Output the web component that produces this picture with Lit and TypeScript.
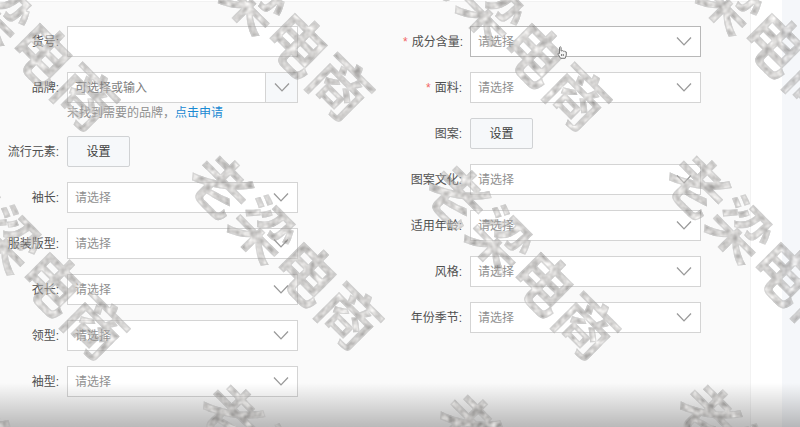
import { LitElement, html, svg, css, nothing } from "lit";
import { customElement, property } from "lit/decorators.js";

type Kind = "text" | "combo" | "button" | "select";

interface Field {
  id: string;
  label: string;
  kind: Kind;
  required?: boolean;
  active?: boolean;
}

const LEFT: Field[] = [
  { id: "sku", label: "货号", kind: "text" },
  { id: "brand", label: "品牌", kind: "combo" },
  { id: "trend", label: "流行元素", kind: "button" },
  { id: "sleeve-length", label: "袖长", kind: "select" },
  { id: "fit", label: "服装版型", kind: "select" },
  { id: "length", label: "衣长", kind: "select" },
  { id: "collar", label: "领型", kind: "select" },
  { id: "sleeve-type", label: "袖型", kind: "select" },
];

const RIGHT: Field[] = [
  { id: "content", label: "成分含量", kind: "select", required: true, active: true },
  { id: "fabric", label: "面料", kind: "select", required: true },
  { id: "pattern", label: "图案", kind: "button" },
  { id: "pattern-culture", label: "图案文化", kind: "select" },
  { id: "age", label: "适用年龄", kind: "select" },
  { id: "style", label: "风格", kind: "select" },
  { id: "season", label: "年份季节", kind: "select" },
];

const chevron = html`<svg class="chevron" width="16" height="10" viewBox="0 0 16 10" aria-hidden="true">
  <path d="M1 0.5 L8 7.9 L15 0.5" fill="none" stroke="#999" stroke-width="1.3" />
</svg>`;

@customElement("form-field")
class FormField extends LitElement {
  @property({ attribute: false }) field!: Field;

  static styles = css`
    :host {
      display: flex;
      gap: 8px;
      font-size: 12px;
      line-height: 18px;
    }
    .label {
      flex: none;
      width: 59px;
      height: 31px;
      line-height: 33px;
      text-align: right;
      white-space: nowrap;
      color: #505050;
    }
    .star {
      color: #f26464;
      margin-right: 4px;
    }
    .body {
      flex: 1;
      min-width: 0;
    }
    .box {
      display: grid;
      grid-template-columns: 1fr 32px;
      align-items: center;
      height: 31px;
      box-sizing: border-box;
      border: 1px solid #d4d4d4;
      background: #fff;
    }
    .box.active {
      border-color: #b8b8b8;
    }
    .control {
      box-sizing: border-box;
      width: 100%;
      height: 29px;
      margin: 0;
      padding: 0 7px;
      border: 0;
      outline: 0;
      background: transparent;
      appearance: none;
      font: inherit;
      color: #909090;
      grid-row: 1;
      grid-column: 1 / -1;
    }
    .control.short {
      grid-column: 1;
    }
    .control::placeholder {
      color: #808080;
      opacity: 1;
    }
    .chevron {
      grid-row: 1;
      grid-column: 2;
      justify-self: center;
      pointer-events: none;
      display: block;
    }
    .drop {
      display: grid;
      place-items: center;
      height: 29px;
      padding: 0;
      border: 0;
      border-left: 1px solid #d4d4d4;
      background: #f6f8fa;
    }
    .drop .chevron {
      grid-column: 1;
    }
    .set {
      width: 63px;
      height: 31px;
      padding: 0;
      border: 1px solid #d0d2d4;
      border-radius: 2px;
      background: #f6f8fa;
      font: inherit;
      color: #404040;
      display: block;
    }
    .hint {
      height: 18px;
      line-height: 20px;
      margin: 0;
      color: #909090;
      white-space: nowrap;
    }
    .link {
      color: #1989d2;
      text-decoration: none;
    }
  `;

  private control() {
    const { id, kind, active } = this.field;
    switch (kind) {
      case "text":
        return html`<div class="box"><input class="control" id=${id} type="text" /></div>`;
      case "combo":
        return html`<div class="box">
            <input class="control short" id=${id} type="text" placeholder="可选择或输入" />
            <button class="drop" type="button" aria-label="品牌">${chevron}</button>
          </div>
          <p class="hint">未找到需要的品牌，<a class="link" href="#">点击申请</a></p>`;
      case "button":
        return html`<button class="set" id=${id} type="button">设置</button>`;
      case "select":
        return html`<div class="box ${active ? "active" : ""}">
          <select class="control" id=${id}><option>请选择</option></select>${chevron}
        </div>`;
    }
  }

  render() {
    const { id, label, required } = this.field;
    return html`<label class="label" for=${id}
        >${required ? html`<span class="star">*</span>` : nothing}${label}:</label
      >
      <div class="body">${this.control()}</div>`;
  }
}

const MARKS = [
  [21, 32], [276, 22], [513, 32], [753, 22],
  [31, 261], [285, 251], [522, 261], [762, 251],
  [41, 490], [296, 480], [533, 490], [773, 480],
];

@customElement("water-mark")
class WaterMark extends LitElement {
  static styles = css`
    :host {
      position: absolute;
      inset: 0;
      overflow: hidden;
      pointer-events: none;
    }
    .sheet {
      display: block;
      width: 100%;
      height: 100%;
    }
    .mark {
      font-family: "Noto Sans CJK SC", sans-serif;
      font-size: 61px;
      font-weight: 700;
      text-anchor: middle;
      fill: #ccc;
    }
  `;

  render() {
    return html`<svg class="sheet" aria-hidden="true">
      <defs>
        <filter
          id="stone"
          filterUnits="userSpaceOnUse"
          x="0"
          y="0"
          width="100%"
          height="100%"
          color-interpolation-filters="sRGB"
        >
          <feTurbulence type="fractalNoise" baseFrequency="0.13" numOctaves="2" seed="4" result="noise" />
          <feColorMatrix
            in="noise"
            type="matrix"
            values="0.9 0 0 0 0.24  0.9 0 0 0 0.23  0.9 0 0 0 0.22  0 0 0 0 1"
            result="grain"
          />
          <feComposite in="grain" in2="SourceAlpha" operator="in" result="face" />
          <feMorphology in="SourceAlpha" operator="erode" radius="1" result="core" />
          <feComposite in="SourceAlpha" in2="core" operator="out" result="rim" />
          <feFlood flood-color="#a4a4a4" flood-opacity="0.7" />
          <feComposite in2="rim" operator="in" result="edge" />
          <feMerge>
            <feMergeNode in="face" />
            <feMergeNode in="edge" />
          </feMerge>
        </filter>
      </defs>
      <g filter="url(#stone)" opacity="0.54">
        ${MARKS.map(
          ([x, y]) => svg`<text class="mark" transform="translate(${x} ${y}) rotate(45)" y="23">老梁电商</text>`
        )}
      </g>
    </svg>`;
  }
}

@customElement("app-root")
class AppRoot extends LitElement {
  static styles = css`
    :host {
      display: flex;
      position: relative;
      min-height: 100vh;
      overflow: hidden;
      background: #fff;
      font-family: "Liberation Sans", "Noto Sans CJK SC", sans-serif;
    }
    .panel {
      flex: 1;
      display: grid;
      grid-template-columns: 1fr 1fr;
      align-items: start;
      column-gap: 105px;
      box-sizing: border-box;
      margin-top: 1px;
      padding: 24px 49px 29px 0;
      border-top: 1px solid #f2f2f2;
      border-right: 1px solid #f2f2f2;
      background: #fafafa;
    }
    .column {
      display: flex;
      flex-direction: column;
      gap: 15px;
      min-width: 0;
    }
    .side {
      flex: none;
      width: 18px;
      margin-left: 31px;
      background: #f5f7fa;
    }
    .shade {
      position: absolute;
      left: 0;
      right: 0;
      bottom: 0;
      height: 44px;
      background: linear-gradient(rgba(0, 0, 0, 0), rgba(0, 0, 0, 0.26));
      pointer-events: none;
    }
    .pointer {
      position: absolute;
      left: 557px;
      top: 46px;
      pointer-events: none;
    }
  `;

  render() {
    return html`<form class="panel">
        <div class="column">${LEFT.map((f) => html`<form-field .field=${f}></form-field>`)}</div>
        <div class="column">${RIGHT.map((f) => html`<form-field .field=${f}></form-field>`)}</div>
      </form>
      <div class="side"></div>
      <div class="shade"></div>
      <water-mark></water-mark>
      <svg class="pointer" width="10" height="13" viewBox="0 0 10 13" aria-hidden="true">
        <path
          d="M2.5 7.5 V1.4 Q3.3 .2 4.1 1.4 V5 L5.6 4.6 L6.2 5.2 L7.4 5 L8 5.7 L9.3 6 V9 L8.2 12.3 H3.6 L.8 8 Q.9 6.6 2.5 7.5 Z M4.6 8 V10 M6.3 8 V10"
          fill="#f4f4f4"
          stroke="#777"
          stroke-width="1"
          stroke-linejoin="round"
        />
      </svg>`;
  }
}
